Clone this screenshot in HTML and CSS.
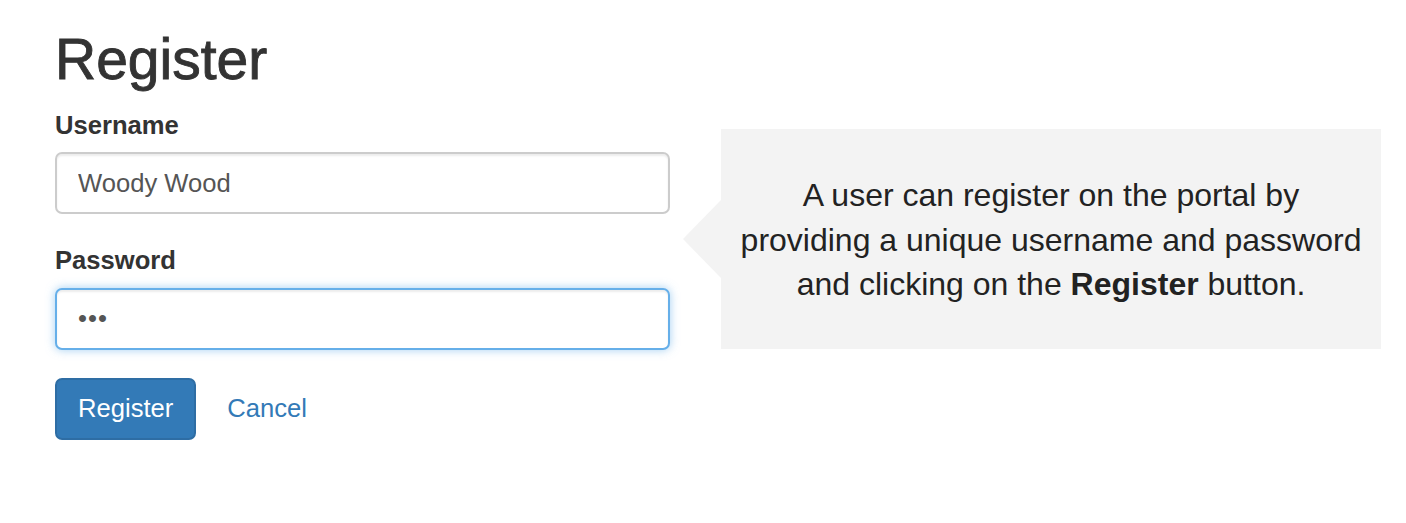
FILE: index.html
```html
<!DOCTYPE html>
<html>
<head>
<meta charset="utf-8">
<title>Register</title>
<link rel="stylesheet" href="styles.css">
</head>
<body>
<div class="page">
  <div class="form-col">
    <h1 class="title">Register</h1>
    <div class="group">
      <label class="label" for="u">Username</label>
      <input class="field" id="u" type="text" value="Woody Wood">
    </div>
    <div class="group">
      <label class="label" for="p">Password</label>
      <input class="field field-focus" id="p" type="password" value="abc">
    </div>
    <div class="actions">
      <button class="btn" type="button">Register</button>
      <a class="cancel" href="#">Cancel</a>
    </div>
  </div>
  <div class="callout">
    <p class="callout-text">A user can register on the portal by<br>providing a unique username and password<br>and clicking on the <b>Register</b> button.</p>
  </div>
</div>
</body>
</html>
```
FILE: styles.css
```css
html, body {
  margin: 0;
  padding: 0;
  background: #ffffff;
}
body {
  font-family: "Liberation Sans", Arial, sans-serif;
  color: #333333;
}
.page {
  display: flex;
  align-items: flex-start;
  padding-left: 55px;
}
.form-col {
  width: 615px;
  display: flex;
  flex-direction: column;
}
.title {
  margin: 28px 0 16px 0;
  font-size: 57px;
  line-height: 1.1;
  font-weight: 500;
  color: #333333;
  -webkit-text-stroke: 0.9px #333333;
}
.group {
  display: flex;
  flex-direction: column;
  margin-bottom: 28px;
}
.label {
  font-size: 25.6px;
  line-height: 36.6px;
  font-weight: bold;
  margin-bottom: 9px;
  color: #333333;
}
.field {
  box-sizing: border-box;
  height: 62px;
  width: 615px;
  padding: 0 21px;
  font-family: "Liberation Sans", Arial, sans-serif;
  font-size: 25.6px;
  color: #555555;
  background: #ffffff;
  border: 2px solid #cccccc;
  border-radius: 7px;
  box-shadow: inset 0 2px 2px rgba(0,0,0,0.075);
  outline: none;
}
.field-focus {
  border-color: #66afe9;
  box-shadow: inset 0 2px 2px rgba(0,0,0,0.075), 0 0 10px rgba(102,175,233,0.6);
  letter-spacing: 1px;
}
.actions {
  display: flex;
  align-items: center;
  gap: 31px;
  margin-top: 0;
}
.btn {
  box-sizing: border-box;
  height: 62px;
  padding: 0 21px;
  font-family: "Liberation Sans", Arial, sans-serif;
  font-size: 25.6px;
  color: #ffffff;
  background: #337ab7;
  border: 2px solid #2e6da4;
  border-radius: 7px;
}
.cancel {
  font-size: 25.6px;
  color: #337ab7;
  text-decoration: none;
}
.callout {
  position: relative;
  box-sizing: border-box;
  margin-left: 51px;
  margin-top: 129px;
  width: 660px;
  height: 220px;
  background: #f3f3f3;
  display: flex;
  align-items: center;
  justify-content: center;
}
.callout::before {
  content: "";
  position: absolute;
  left: -38px;
  top: 71px;
  width: 0;
  height: 0;
  border-top: 39px solid transparent;
  border-bottom: 39px solid transparent;
  border-right: 38px solid #f3f3f3;
}
.callout-text {
  margin: 2px 0 0 0;
  text-align: center;
  font-size: 32px;
  line-height: 44.5px;
  color: #222222;
}
.callout-text b {
  font-weight: bold;
}
```
